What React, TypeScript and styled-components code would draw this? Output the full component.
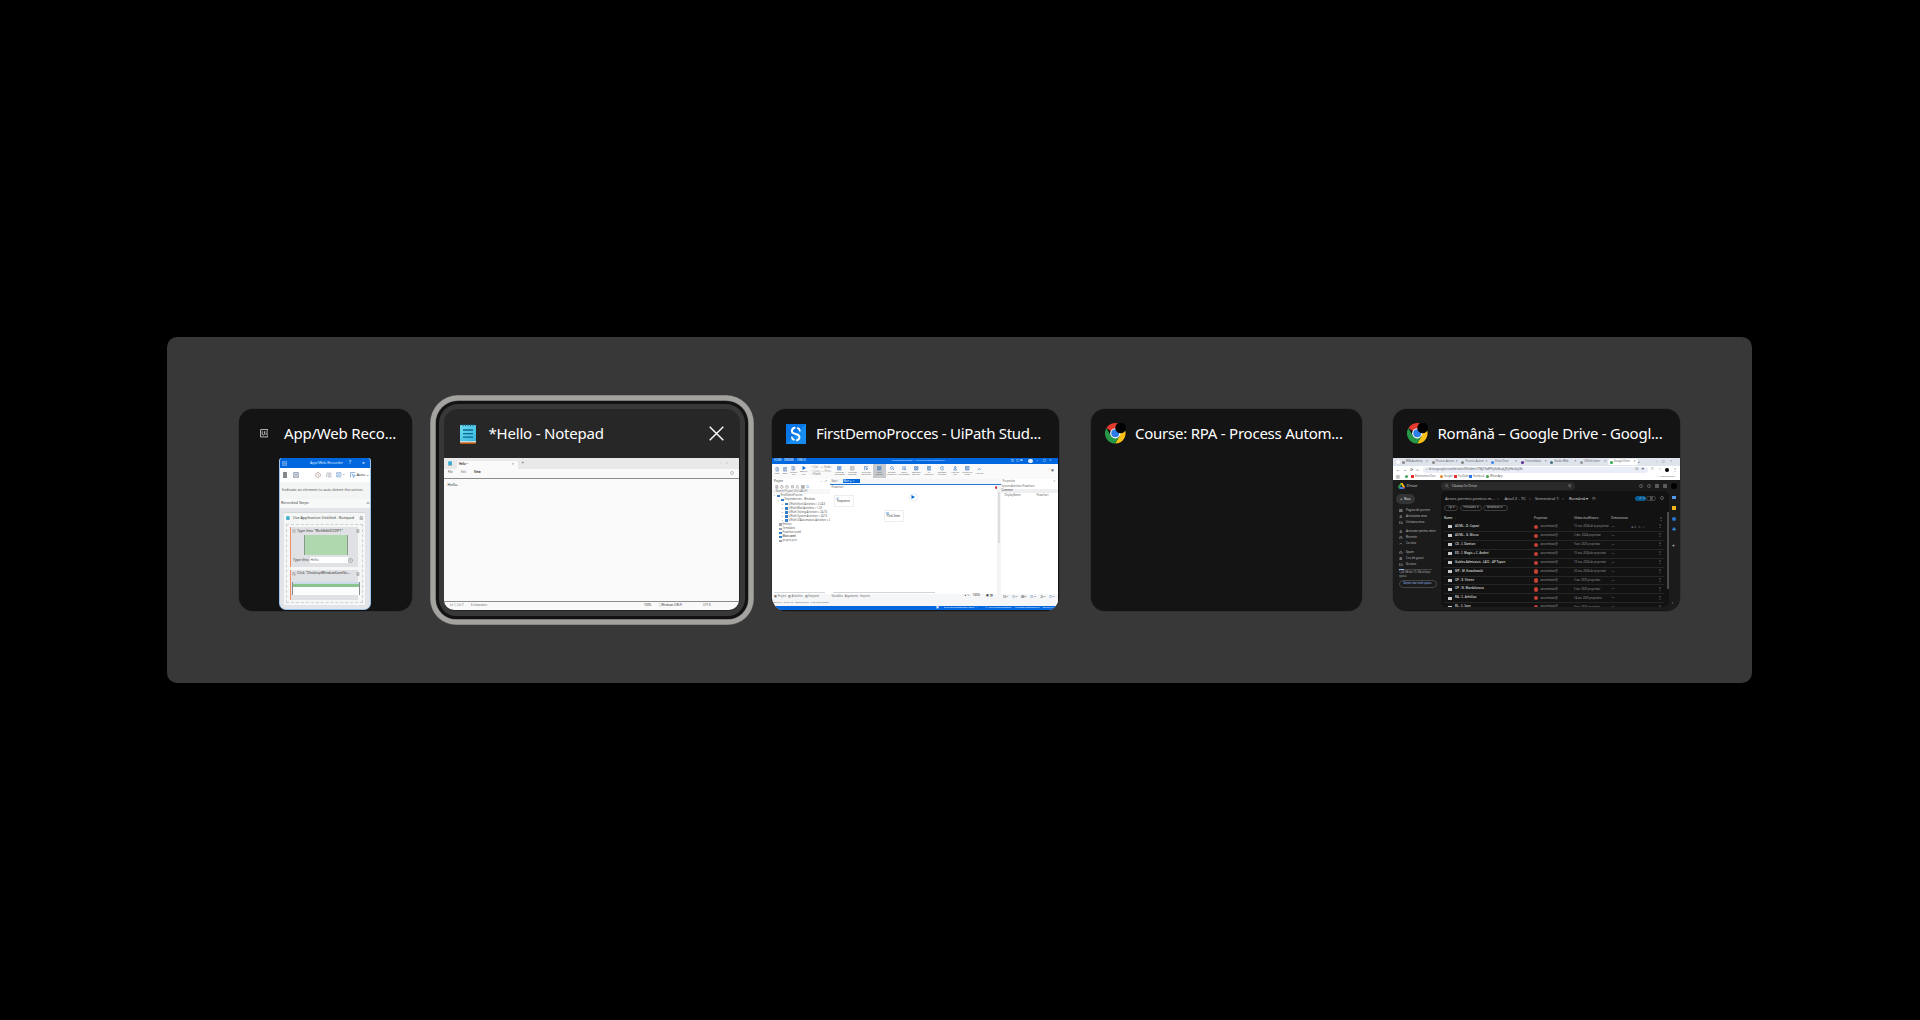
import React from "react";
import styled, { createGlobalStyle } from "styled-components";

const GlobalStyle = createGlobalStyle`
  * { box-sizing: border-box; }
  html, body { margin: 0; background: #000; overflow: hidden; }
  body { font-family: "Noto Sans", "Open Sans", sans-serif; }
  svg { display: block; flex: none; }
`;

/* ---------- Switcher shell ---------- */

const Screen = styled.main`
  width: 1920px;
  height: 1020px;
  padding: 337px 0 0 167px;
  background: #000;
`;

const Panel = styled.section`
  display: flex;
  align-items: flex-start;
  width: 1585px;
  height: 346px;
  padding: 72px 72px 0;
  border-radius: 10px;
  background: #383838;
`;

const Card = styled.article<{ $w: number; $gap: number; $active?: boolean }>`
  flex: none;
  display: flex;
  flex-direction: column;
  width: ${(p) => p.$w}px;
  height: 201.5px;
  margin-left: ${(p) => p.$gap}px;
  border-radius: ${(p) => (p.$active ? "14px 14px 12px 12px" : "14px")};
  background: ${(p) => (p.$active ? "#272727" : "#141414")};
  box-shadow: ${(p) =>
    p.$active
      ? "0 0 0 5px #383838, 0 0 0 8px #121212, 0 0 0 8.5px #555, 0 0 0 13.5px #a5a39f, 0 0 0 14px #6c6b69"
      : "0 0 0 0.5px #2b2b2b"};
  overflow: ${(p) => (p.$active ? "visible" : "hidden")};
`;

const Header = styled.header<{ $pad: number }>`
  flex: none;
  display: flex;
  align-items: center;
  height: 49px;
  padding: 0 14px 0 ${(p) => p.$pad}px;
`;

const IconBox = styled.div<{ $w: number }>`
  flex: none;
  width: ${(p) => p.$w}px;
`;

const Title = styled.h2<{ $spacing: number }>`
  flex: 1;
  margin: 0;
  padding-bottom: 2px;
  color: #fff;
  font-size: 15px;
  font-weight: 400;
  line-height: 22px;
  letter-spacing: ${(p) => p.$spacing}px;
  white-space: nowrap;
`;

/* ---------- Shared preview pieces ---------- */

const Preview = styled.div<{ $w: number; $bg: string; $r?: string }>`
  display: flex;
  flex-direction: column;
  align-self: ${(p) => (p.$w < 100 ? "center" : "flex-start")};
  width: ${(p) => p.$w}px;
  height: 152px;
  border-radius: ${(p) => p.$r ?? "0"};
  background: ${(p) => p.$bg};
  overflow: hidden;
`;

const Row = styled.div<{ $h: number; $bg?: string; $px?: number }>`
  flex: none;
  display: flex;
  align-items: center;
  height: ${(p) => p.$h}px;
  padding-left: ${(p) => p.$px ?? 0}px;
  background: ${(p) => p.$bg ?? "transparent"};
`;

const Col = styled.div<{ $w?: number; $bg?: string }>`
  display: flex;
  flex-direction: column;
  flex: ${(p) => (p.$w ? `0 0 ${p.$w}px` : "1")};
  min-width: 0;
  background: ${(p) => p.$bg ?? "transparent"};
`;

const Cell = styled.span<{ $w?: number; $c?: string; $s?: number; $b?: boolean }>`
  flex: none;
  width: ${(p) => (p.$w ? `${p.$w}px` : "auto")};
  color: ${(p) => p.$c ?? "#666"};
  font-size: ${(p) => p.$s ?? 3}px;
  font-weight: ${(p) => (p.$b ? 600 : 400)};
  line-height: 1.3;
  white-space: nowrap;
`;

const Dot = styled.i<{ $c: string; $w?: number; $h?: number; $m?: number; $r?: number }>`
  flex: none;
  width: ${(p) => p.$w ?? 3}px;
  height: ${(p) => p.$h ?? 3}px;
  margin-right: ${(p) => p.$m ?? 0}px;
  border-radius: ${(p) => p.$r ?? 0}px;
  background: ${(p) => p.$c};
`;

/* ---------- Icons ---------- */

const NotepadIcon = ({ size = 20 }: { size?: number }) => (
  <svg width={(size * 16) / 20} height={size} viewBox="0 0 16 20">
    <defs>
      <linearGradient id="pad" x1="0" y1="0" x2="1" y2="1">
        <stop offset="0" stopColor="#6fdcf0" />
        <stop offset="1" stopColor="#35b4dc" />
      </linearGradient>
    </defs>
    <rect x="0" y="15" width="16" height="5" rx="1" fill="#b8560f" />
    <rect x="0" y="15" width="16" height="3.4" fill="#e9e4df" />
    <rect x="0" y="1" width="16" height="16.2" rx="0.8" fill="url(#pad)" />
    <path d="M3 0v2.2M5.5 0v2.2M8 0v2.2M10.5 0v2.2M13 0v2.2" stroke="#125f7d" strokeWidth="1" />
    <path d="M3 6h10M3 9.7h10M3 13.2h10" stroke="#096a94" strokeWidth="1.3" />
  </svg>
);

const ChromeIcon = () => (
  <svg width="20.5" height="20.5" viewBox="0 0 48 48">
    <path d="M24 24 3.2 12A24 24 0 0 1 44.8 12Z" fill="#e33b2e" />
    <path d="M24 12h20.8A24 24 0 0 1 24 48l10.4-18Z" fill="#fbc116" />
    <path d="M3.2 12A24 24 0 0 0 24 48l10.4-18L13.6 30Z" fill="#279847" />
    <circle cx="24" cy="24" r="12" fill="#fff" />
    <circle cx="24" cy="24" r="9.3" fill="#2f7de9" />
    <circle cx="36.5" cy="11.5" r="12.5" fill="#000" />
  </svg>
);

const StudioIcon = () => (
  <svg width="20" height="20" viewBox="0 0 20 20">
    <rect width="20" height="20" fill="#0877e5" />
    <path d="M0 20 20 0v20Z" fill="#168bf0" />
    <path d="M8.6 3.8C5.4 4.6 5 8.4 7.9 9.4l3.3 1.1c3 1.2 2.9 4.9-.2 5.7" fill="none" stroke="#fff" strokeWidth="2" strokeLinecap="round" />
    <path d="M5.9 13.3c.2 1.2.8 2 1.9 2.5M11.8 4.1c1.2.5 1.9 1.4 2 2.6" fill="none" stroke="#fff" strokeWidth="1.8" strokeLinecap="round" />
  </svg>
);

const UiIcon = ({ size = 8.5 }: { size?: number }) => (
  <svg width={size} height={size} viewBox="0 0 9 9" fill="none" stroke="#eee" strokeWidth="0.8">
    <path d="M.6.6h7.8v7.8H.6Z" />
    <path d="M2.4 2.4v2.6c0 1.8 2.4 1.8 2.4 0V2.4M6.5 3.7v2.7M6.5 2v.8" />
  </svg>
);

const CloseIcon = () => (
  <svg width="15" height="15" viewBox="0 0 15 15" stroke="#fff" strokeWidth="1.4">
    <path d="m.7.7 13.6 13.6M14.3.7.7 14.3" />
  </svg>
);

const DriveIcon = () => (
  <svg width="7" height="6" viewBox="0 0 14 12">
    <path d="M5 0h4L4.5 8 2.3 12 0 8Z" fill="#2ba24c" />
    <path d="M5 0h4l5 8H9.5Z" fill="#fbbf12" />
    <path d="M4.5 8H14l-2.3 4H2.3Z" fill="#3c7ee8" />
    <path d="M9.5 8H14l-2.3 4Z" fill="#e5483a" />
  </svg>
);

type GlyphKind = "doc" | "trash" | "circle" | "grid" | "list" | "cursor" | "search" | "up" | "save" | "people" | "folder";
const shapes: Record<GlyphKind, string> = {
  doc: "M2 1h4l2 2v6H2ZM6 1v2h2M3.5 5h3M3.5 7h3",
  trash: "M1.5 2.5h7M3.5 2V1h3v1M2.5 3v6h5V3M4.2 4.5v3M5.8 4.5v3",
  circle: "M5 1a4 4 0 1 0 .01 0M5 3v2l1.5 1",
  grid: "M1 1h3.3v3.3H1ZM5.7 1H9v3.3H5.7ZM1 5.7h3.3V9H1ZM5.7 5.7H9V9H5.7Z",
  list: "M1 2h8M3 5h6M3 8h6M1 4v4",
  cursor: "M1 9V1h8M4 4l5 2-2 .8L6 9Z",
  search: "M4 1a3 3 0 1 0 .01 0M6.3 6.3 9 9",
  up: "M1.5 7 5 3l3.5 4",
  save: "M1 1h8v8H1ZM3 1v3h4V1M3 9V6h4v3",
  people: "M5 1.2a1.8 1.8 0 1 0 .01 0M1.5 9c0-4.5 7-4.5 7 0Z",
  folder: "M.8 2h3l1 1h4.4v5H.8Z",
};
const Glyph = ({ k, s = 4, c = "#777", w = 1 }: { k: GlyphKind; s?: number; c?: string; w?: number }) => (
  <svg width={s} height={s} viewBox="0 0 10 10" fill="none" stroke={c} strokeWidth={w}>
    <path d={shapes[k]} />
  </svg>
);

const PlayIcon = () => (
  <svg width="4" height="4" viewBox="0 0 8 8" fill="#006ad8">
    <path d="M1 0 8 4 1 8Z" />
  </svg>
);

const Spaced = styled.div<{ $w: number }>`
  flex: none;
  display: flex;
  align-items: center;
  width: ${(p) => p.$w}px;
`;

/* ---------- Recorder preview ---------- */

const RecorderFrame = styled(Preview)`
  margin-right: 1px;
  border: 0.6px solid #9bc4ef;
  border-top: 0;
  border-radius: 3px 3px 7px 7px;
`;

const StepsArea = styled.div`
  flex: 1;
  padding: 4px 5px 5px 4px;
  background: #e2e4e7;
`;

const AppBox = styled.div`
  display: flex;
  flex-direction: column;
  height: 93px;
  padding: 0 2px;
  border-top: 1px solid #d3d5d8;
  background: #f5f6f6;
`;

const StepsBox = styled.div`
  display: flex;
  flex-direction: column;
  gap: 3px;
  height: 79px;
  padding: 2.5px 4px 0 2.5px;
  border: 0.8px dashed #cfd1d3;
`;

const Step = styled.div<{ $h: number }>`
  display: flex;
  flex-direction: column;
  height: ${(p) => p.$h}px;
  padding-left: 1.5px;
  border-left: 1.4px solid #f58a68;
  background: #e0e1e4;
`;

const Shot = styled.div`
  flex: none;
  width: 44px;
  height: 20px;
  margin-left: 12px;
  border: solid #8a9a8b;
  border-width: 0 0.8px;
  background: #afd8af;
`;

const ClickShot = styled.div`
  width: 68px;
  height: 13px;
  margin-top: 4px;
  border: solid #8b8e90;
  border-width: 0 0.8px;
  background: linear-gradient(#c9dbe9 0 1.5px, #89c38e 1.5px 4.5px, #fbfcfb 4.5px);
`;

const Field = styled.div`
  width: 38px;
  height: 6px;
  padding-left: 1px;
  background: #fff;
  display: flex;
  align-items: center;
`;

const RecorderPreview = () => (
  <RecorderFrame $w={92} $bg="#f3f5f5">
    <Row $h={10} $bg="#0067df" $px={2}>
      <Spaced $w={28}><UiIcon size={5} /></Spaced>
      <Cell $w={39} $c="#dceaff" $s={3.75}>App/Web Recorder</Cell>
      <Cell $w={13} $c="#fff" $s={4.5}>?</Cell>
      <Cell $c="#fff" $s={5}>×</Cell>
    </Row>
    <Row $h={13.5} $bg="#fff" $px={3}>
      <Spaced $w={10}><Dot $c="#85888b" $w={4} $h={6} /></Spaced>
      <Spaced $w={21.5}><Glyph k="save" s={6} c="#65798f" /></Spaced>
      <Spaced $w={11}><Glyph k="circle" s={6} c="#a07e72" /></Spaced>
      <Spaced $w={10.5}><Glyph k="list" s={6} c="#77818c" /></Spaced>
      <Spaced $w={14}><Glyph k="save" s={5.5} c="#709ed2" /><Cell $s={3.5}>⌄</Cell></Spaced>
      <Spaced $w={6.5}><Glyph k="cursor" s={6} c="#3a83cc" /></Spaced>
      <Cell $s={4} $c="#333">Auto ⌄</Cell>
    </Row>
    <Row $h={17.5} $px={2}><Cell $s={3.8} $c="#555">Indicate an element to auto detect the action.</Cell></Row>
    <Row $h={8.5} $px={1} $bg="#f7f8f8">
      <Cell $w={84.5} $s={3.8} $c="#444">Recorded Steps</Cell>
      <Glyph k="up" s={4} c="#333" w={1.4} />
    </Row>
    <StepsArea>
      <AppBox>
        <Row $h={11}>
          <Spaced $w={7}><NotepadIcon size={4.5} /></Spaced>
          <Cell $w={65.5} $s={3.7} $c="#333">Use Application: Untitled - Notepad</Cell>
          <Glyph k="trash" s={4.5} />
        </Row>
        <StepsBox>
          <Step $h={39.5}>
            <Row $h={8}><Spaced $w={5}><Glyph k="list" s={4} /></Spaced><Cell $w={59} $s={3.7} $c="#333">Type Into "RichEditD2DPT"</Cell><Glyph k="trash" s={4} /></Row>
            <Shot />
            <Row $h={10} $px={1}><Cell $w={16.5} $s={3.6} $c="#333">Type this:</Cell><Field><Cell $s={3.4}>Hello</Cell></Field><Spaced $w={6}><Glyph k="circle" s={5} /></Spaced></Row>
          </Step>
          <Step $h={30}>
            <Row $h={8}><Spaced $w={5}><Glyph k="cursor" s={4} /></Spaced><Cell $w={59} $s={3.6} $c="#333">Click "DesktopWindowXamlSo...</Cell><Glyph k="trash" s={4} /></Row>
            <ClickShot />
          </Step>
        </StepsBox>
      </AppBox>
    </StepsArea>
  </RecorderFrame>
);

/* ---------- Notepad preview ---------- */

const NoteTab = styled.div`
  display: flex;
  align-items: center;
  align-self: flex-end;
  width: 61px;
  height: 8px;
  padding-left: 2px;
  border-radius: 2px 2px 0 0;
  background: #fafafa;
`;

const Writing = styled.div`
  flex: 1;
  padding: 4px 3.5px;
  border: solid #8c8c8c;
  border-width: 0.8px 0;
`;

const NotepadPreview = () => (
  <Preview $w={295} $bg="#f9f9f9" $r="1px 1px 10px 10px">
    <Row $h={11} $bg="#e9e9e9" $px={4}>
      <Spaced $w={9}><NotepadIcon size={5} /></Spaced>
      <NoteTab><Cell $w={53} $s={2.7} $c="#111" $b>Hello •</Cell><Cell $s={3} $c="#333">×</Cell></NoteTab>
      <Cell $w={202} $s={4.5}> &nbsp; &nbsp;+</Cell>
      <Cell $s={3} $c="#888">▫ &nbsp; &nbsp; &nbsp;×</Cell>
    </Row>
    <Row $h={8.5} $px={4}>
      <Cell $w={13} $s={2.8} $c="#333">File</Cell>
      <Cell $w={13} $s={2.8} $c="#777">Edit</Cell>
      <Cell $w={256} $s={2.8} $c="#111" $b>View</Cell>
      <Glyph k="circle" s={4} />
    </Row>
    <Writing><Row $h={4}><Cell $s={4} $c="#333">Hello.</Cell></Row></Writing>
    <Row $h={8.5} $px={6}>
      <Cell $w={21} $s={2.8}>Ln 1, Col 7</Cell>
      <Cell $w={173} $s={2.8}>6 characters</Cell>
      <Cell $w={15} $s={2.8} $c="#333">100%</Cell>
      <Cell $w={44} $s={2.8} $c="#333">| Windows (CRLF)</Cell>
      <Cell $s={2.8}>UTF-8</Cell>
    </Row>
  </Preview>
);

/* ---------- Studio preview ---------- */

const Tool = styled.div<{ $w: number; $on?: boolean }>`
  flex: none;
  display: flex;
  flex-direction: column;
  align-items: center;
  justify-content: center;
  gap: 1px;
  width: ${(p) => p.$w}px;
  height: 14px;
  background: ${(p) => (p.$on ? "#c6c9cd" : "transparent")};
`;

const ToolLabel = styled.span`
  color: #666;
  font-size: 2.3px;
  line-height: 2.6px;
  text-align: center;
`;

const Body = styled.div`
  flex: 1;
  display: flex;
  min-height: 0;
`;

const StudioTab = styled.div`
  display: flex;
  align-items: center;
  width: 17px;
  height: 4px;
  margin-left: 5px;
  background: #0067df;
`;

const Canvas = styled.div`
  position: relative;
  flex: 1;
  background-color: #fff;
  background-image: radial-gradient(#eef0f2 0.5px, transparent 0.6px);
  background-size: 4px 4px;
`;

const FlowNode = styled.div<{ $x: number; $y: number }>`
  position: absolute;
  left: ${(p) => p.$x}px;
  top: ${(p) => p.$y}px;
  display: flex;
  flex-direction: column;
  width: 20px;
  height: 12.5px;
  border: 0.7px solid #eceef0;
  background: #fff;
  text-align: center;
`;

const StartNode = styled.div`
  position: absolute;
  left: 79px;
  top: 3px;
  display: grid;
  place-items: center;
  width: 9px;
  height: 9px;
  border: 0.6px solid #e9ecef;
  border-radius: 50%;
  background: #fff;
`;

const VScroll = styled.div`
  flex: 0 0 3.5px;
  padding: 7px 1px 0;
  background: #f3f4f5;
  &::before {
    content: "";
    display: block;
    height: 51px;
    background: #dcdddf;
  }
`;

const tools: [string, string, number, GlyphKind][] = [
  ["New", "", 8, "doc"], ["Save", "", 8, "save"], ["Export", "File", 9, "doc"], ["Debug", "File", 11, "cursor"],
];
const moreTools: [string, string, number, GlyphKind][] = [
  ["Manage", "Packages", 13, "grid"], ["Manage", "Entities", 13, "save"], ["App/Web", "Recorder", 14, "cursor"],
  ["User", "Events", 0, "grid"], ["Screen", "Scraping", 12.5, "search"], ["Table", "Extraction", 12, "list"],
  ["Selector", "Builder", 12.5, "grid"], ["UI", "Explorer", 13, "save"], ["Remove", "Unused", 13, "circle"],
  ["Analyze", "File", 13, "people"], ["Export to", "Excel", 12, "save"], ["Publish", "", 12, "up"],
];
const tree = [
  [4, "FirstDemoProcces"], [8, "Dependencies - Windows"], [12, "UiPath.Excel.Activities = 2.24.3"],
  [12, "UiPath.Mail.Activities = 1.23"], [12, "UiPath.Testing.Activities = 24.10"], [12, "UiPath.System.Activities = 24.10"],
  [12, "UiPath.UIAutomation.Activities = 24.10"], [9, "Entities"], [9, "Templates"], [9, "Flowchart.xaml"],
  [9, "Main.xaml"], [9, "project.json"],
] as const;

const StudioPreview = () => (
  <Preview $w={286} $bg="#f5f6f7">
    <Row $h={5.8} $bg="#0067df" $px={2}>
      <Cell $w={10} $s={2.6} $c="#dbe9ff">HOME</Cell>
      <Cell $w={13} $s={2.6} $c="#fff">DESIGN</Cell>
      <Cell $w={95} $s={2.6} $c="#dbe9ff">DEBUG</Cell>
      <Cell $w={119} $s={2.4} $c="#dbe9ff">FirstDemoProcces — UiPath Studio Community</Cell>
      <Cell $w={17} $s={3} $c="#fff">◫ &nbsp;▢ &nbsp;⊞</Cell>
      <Dot $c="#e8edf4" $w={4.5} $h={4.5} $r={3} $m={4} />
      <Cell $s={3} $c="#fff">– &nbsp; &nbsp; &nbsp;▢ &nbsp; &nbsp; ×</Cell>
    </Row>
    <Row $h={15.2} $bg="#fafafa" $px={1}>
      {tools.map(([a, b, w, k], i) => (
        <Tool key={a} $w={w}>
          {i === 3 ? <PlayIcon /> : <Glyph k={k} s={4.5} c="#5b87b8" w={1.3} />}
          <ToolLabel>{a}<br />{b}</ToolLabel>
        </Tool>
      ))}
      <Col $w={24}>
        <Cell $s={2.8} $c="#777">&nbsp; &nbsp;□ Cut &nbsp; — Undo</Cell>
        <Cell $s={2.8} $c="#aaa">&nbsp; &nbsp;□ Copy — Redo</Cell>
        <Cell $s={2.8} $c="#777">&nbsp; &nbsp;□ Paste</Cell>
      </Col>
      {moreTools.map(([a, b, w, k], i) => (
        <Tool key={i} $w={w || 12.5} $on={w === 0}><Glyph k={k} s={4.5} c={i === 1 ? "#aaa" : "#3f7cc0"} w={1.4} /><ToolLabel>{a}<br />{b}</ToolLabel></Tool>
      ))}
      <Cell $w={62} /><Cell $s={3}>⌃ ▣</Cell>
    </Row>
    <Body>
      <Col $w={57.5} $bg="#fff">
        <Row $h={5.5} $px={2}><Cell $w={46} $s={2.8} $c="#333">Project</Cell><Cell $s={3}>⌄ ▫ ×</Cell></Row>
        <Row $h={5} $px={3}>
          {(["doc", "circle", "circle", "cursor", "folder", "grid", "search"] as GlyphKind[]).map((k, i) => (
            <Spaced $w={5.2} key={i}><Glyph k={k} s={3.7} c={i === 6 ? "#2c7ad1" : "#555"} /></Spaced>
          ))}
        </Row>
        <Row $h={4.5} $px={2} $bg="#f7f7f7"><Cell $s={2.6}>⌕ Search Project (Ctrl+Alt+F)</Cell></Row>
        {tree.map(([x, label], i) => (
          <Row $h={4.1} $px={x - 2} key={label}>
            {i < 7 && <Cell $w={3} $s={2.4}>▸</Cell>}
            <Dot $c={i > 6 && i !== 9 && i !== 10 ? "#9ba5b0" : "#347fcd"} $w={2.8} $h={2.4} $m={0.7} />
            <Cell $s={2.6} $c="#555" $b={i === 10}>{label}</Cell>
          </Row>
        ))}
        <Col />
        <Row $h={3} $px={2}><Dot $c="#d5d7d9" $w={51} $h={1.5} /></Row>
        <Row $h={5} $px={2} $bg="#f5f6f7"><Cell $s={2.6}>▣ Project &nbsp; ▧ Activities &nbsp; ▤ Snippets</Cell></Row>
      </Col>
      <Col>
        <Row $h={5} $px={2}><Cell $w={6} $s={2.6}>Start</Cell><StudioTab><Cell $s={2.6} $c="#fff">&nbsp;Main ● &nbsp;×</Cell></StudioTab></Row>
        <Row $h={0.8} $bg="#2478d8" />
        <Body>
          <Col $bg="#fff">
            <Row $h={5} $px={2}><Cell $w={163} $s={2.6}>Flowchart</Cell><Dot $c="#d53441" $r={2} /></Row>
            <Canvas>
              <FlowNode $x={4} $y={5}><Row $h={4.5} $px={1}><Glyph k="list" s={3} c="#3180ca" /></Row><Cell $s={2.8} $c="#333">Sequence</Cell></FlowNode>
              <StartNode><PlayIcon /></StartNode>
              <FlowNode $x={54} $y={20}><Row $h={4.5} $px={1}><Glyph k="save" s={3} c="#3180ca" /></Row><Cell $s={2.8} $c="#333">Click Item</Cell></FlowNode>
            </Canvas>
            <Row $h={3} $px={3}><Dot $c="#d2d4d6" $w={102} $h={1.6} /></Row>
          </Col>
          <VScroll />
        </Body>
        <Row $h={5} $px={2} $bg="#f5f6f7"><Cell $w={133} $s={2.6}>Variables &nbsp; Arguments &nbsp; Imports</Cell><Cell $s={3} $c="#333">● ✎ &nbsp; 100% &nbsp; &nbsp; &nbsp; &nbsp;▣ ▧</Cell></Row>
      </Col>
      <Col $w={57.5} $bg="#fff">
        <Row $h={5.5} $px={2}><Cell $w={51} $s={2.6}>Properties</Cell><Cell $s={3}>×</Cell></Row>
        <Row $h={4.5} $px={1}><Cell $s={2.6}>System.Activities.Flowchart</Cell></Row>
        <Row $h={4} $px={1} $bg="#eeeff0"><Cell $s={2.6} $c="#333">Common</Cell></Row>
        <Row $h={4.5} $px={4}><Cell $w={32} $s={2.6}>DisplayName</Cell><Cell $s={2.6}>Flowchart</Cell></Row>
        <Col />
        <Row $h={5} $px={2} $bg="#f5f6f7">
          {(["cursor", "search", "grid", "list", "people", "circle"] as GlyphKind[]).map((k, i) => (
            <Spaced $w={9.3} key={k}><Glyph k={k} s={3.5} c={i % 2 ? "#3a78bb" : "#555"} /><Cell $s={2.5}>O.</Cell></Spaced>
          ))}
        </Row>
      </Col>
    </Body>
    <Row $h={7} $px={1.5}><Cell $s={2.4}>Output &nbsp; Error List &nbsp; Breakpoints &nbsp; Find References</Cell></Row>
    <Row $h={4.2} $bg="#0067df" $px={164}>
      <Cell $w={8} $s={2.6} $c="#fff">▣</Cell>
      <Cell $w={41} $s={2.3} $c="#fff">● UiPath Orchestrator Cloud &nbsp;⌄</Cell>
      <Cell $w={30} $s={2.3} $c="#fff">✦ Add to Source Control</Cell>
      <Cell $w={27} $s={2.3} $c="#fff">Windows Compatibility</Cell>
      <Cell $s={2.3} $c="#fff">VB.Net 24.10</Cell>
    </Row>
  </Preview>
);

/* ---------- Drive preview ---------- */

const BrowserTab = styled.div<{ $on?: boolean }>`
  flex: none;
  display: flex;
  align-items: center;
  gap: 1px;
  width: 29.7px;
  height: 6.5px;
  padding: 0 2px;
  border-radius: 2px;
  background: ${(p) => (p.$on ? "#fff" : "transparent")};
`;

const Address = styled.div`
  display: flex;
  align-items: center;
  width: 225px;
  height: 6px;
  padding-left: 3px;
  border-radius: 3px;
  background: #e9eef8;
`;

const Pill = styled.div<{ $w: number; $h: number; $bg?: string; $line?: string; $m?: number }>`
  flex: none;
  display: flex;
  align-items: center;
  width: ${(p) => p.$w}px;
  height: ${(p) => p.$h}px;
  padding: 0 3px;
  margin-right: ${(p) => p.$m ?? 0}px;
  border: 0.7px solid ${(p) => p.$line ?? "transparent"};
  border-radius: 5px;
  background: ${(p) => p.$bg ?? "transparent"};
  overflow: hidden;
`;

const Files = styled.div`
  flex: none;
  display: flex;
  width: 228px;
  height: 116px;
  padding-left: 3px;
  border-radius: 5px;
  background: #121212;
  overflow: hidden;
`;

const FilesScroll = styled.div`
  flex: none;
  width: 2px;
  height: 77px;
  margin-top: 21px;
  background: #4a4b4d;
`;

const FileRow = styled.div`
  flex: none;
  display: flex;
  align-items: center;
  width: 220px;
  height: 8.95px;
  padding-left: 4px;
  border-bottom: 0.8px solid #262626;
`;

const SideGap = styled.div<{ $h: number }>`
  flex: none;
  height: ${(p) => p.$h}px;
`;

const Side = ({ k, label }: { k: GlyphKind; label: string }) => (
  <Row $h={6} $px={6}><Spaced $w={7}><Glyph k={k} s={3.5} c="#bbb" w={1.3} /></Spaced><Cell $s={2.9} $c="#bbb">{label}</Cell></Row>
);

const tabs: [string, string][] = [
  ["#888", "RPA Academy"], ["#888", "Process Autom"], ["#888", "Process Autom"], ["#4285f4", "Drive Drive"],
  ["#5c2d91", "Universitatea"], ["#4a7180", "Studio Web"], ["#999", "UiPath Learn"], ["#34a853", "Google Drive"],
];
const files = [
  ["AI/ML - D. Copaci", "15 nov. 2024 de la proprietar"], ["AI/ML - G. Moroz", "2 dec. 2024 proprietar"], ["CD - I. Damian", "9 ian. 2025 proprietar"],
  ["ED - I. Magic + C. Andrei", "15 nov. 2024 de proprietar"], ["Guides.Admission - LAIC - AP Topan", "19 nov. 2024 de proprietar"],
  ["MP - M. Kowalewski", "20 nov. 2024 de proprietar"], ["OP - E. Vinten", "2 ian. 2025 proprietar"], ["OP - N. Mardaloescu", "5 ian. 2025 proprietar"],
  ["RA - C. Arhiiliuc", "14 ian. 2025 proprietar"], ["RL - C. Ivan", "3 ian. 2025 proprietar"],
];

const DrivePreview = () => (
  <Preview $w={286.5} $bg="#1b1b1c">
    <Row $h={8} $bg="#dee3ec" $px={3}>
      <Spaced $w={4}><Dot $c="#fff" $r={2} $w={4} $h={4} /></Spaced>
      {tabs.map(([c, t], i) => (
        <BrowserTab key={i} $on={i === 7}><Dot $c={c} $r={1.5} /><Cell $w={19} $s={2.6}>{t}</Cell><Cell $s={3} $c="#333">×</Cell></BrowserTab>
      ))}
      <Cell $w={18} $s={4} $c="#333">+</Cell><Cell $s={3}>– &nbsp; &nbsp; &nbsp; ▢ &nbsp; &nbsp; &nbsp;×</Cell>
    </Row>
    <Row $h={7.3} $bg="#fff" $px={3}>
      <Cell $w={27} $s={4} $c="#333">← &nbsp; → &nbsp; ⟳ &nbsp; ⌂</Cell>
      <Address><Cell $w={209} $s={2.9} $c="#555">⌕ drive.google.com/drive/u/0/folders/1Mj2TwEPVyKxBoqLJJ5yHkcQuJ9x</Cell><Cell $s={3.5}>⊡ &nbsp; ★</Cell></Address>
      <Cell $w={17} $s={3.5}>&nbsp; &nbsp;⎘ &nbsp; &nbsp; &nbsp;⌕</Cell><Dot $c="#000" $w={4} $h={4} $r={2} $m={4} /><Cell $s={4}>⋮</Cell>
    </Row>
    <Row $h={7} $bg="#fff" $px={3}>
      <Spaced $w={9}><Glyph k="grid" s={3.7} /></Spaced>
      <Dot $c="#4aa15c" $m={3} $r={2} />
      <Dot $c="#e52e2e" $m={1} /><Cell $w={25} $s={2.8}>Electronics Disc.</Cell>
      <Dot $c="#e78b2d" $m={1} $r={2} /><Cell $w={10} $s={2.6}>Google</Cell>
      <Dot $c="#e52e2e" $m={1} /><Cell $w={11} $s={2.6}>YouTube</Cell>
      <Dot $c="#2c77e5" $m={1} /><Cell $w={13} $s={2.6}>Facebook</Cell>
      <Dot $c="#43a047" $m={1} $r={2} /><Cell $w={166} $s={2.6}>WhatsApp</Cell>
      <Cell $s={2.4}>▢ All Bookmarks</Cell>
    </Row>
    <Row $h={11.2} $px={5}>
      <Spaced $w={8.5}><DriveIcon /></Spaced><Cell $w={34.5} $s={4.3} $c="#ccc">Drive</Cell>
      <Pill $w={134} $h={8} $bg="#2a2a2b" $m={64}><Glyph k="search" s={4} c="#bbb" /><Cell $w={119} $s={3.5} $c="#ccc">&nbsp; &nbsp;Căutați în Drive</Cell><Glyph k="list" s={3.5} c="#bbb" /></Pill>
      {(["circle", "circle", "grid", "grid"] as GlyphKind[]).map((k, i) => <Spaced $w={8.1} key={i}><Glyph k={k} s={4.2} c="#aaa" /></Spaced>)}
      <Dot $c="#000" $w={6} $h={6} $r={3} />
    </Row>
    <Body>
      <Col $w={48}>
        <SideGap $h={2} />
        <Row $h={11} $px={3}><Pill $w={19} $h={10} $bg="#333436"><Cell $s={4} $c="#fff">+</Cell><Cell $s={3.3} $c="#eee">&nbsp; Nou</Cell></Pill></Row>
        <SideGap $h={3} />
        <Side k="save" label="Pagina de pornire" /><Side k="people" label="Activitatea mea" /><Side k="folder" label="Unitatea mea" />
        <SideGap $h={3} />
        <Side k="people" label="Accesate pentru mine" /><Side k="circle" label="Recente" /><Side k="up" label="Cu stea" />
        <SideGap $h={3} />
        <Side k="circle" label="Spam" /><Side k="trash" label="Coș de gunoi" /><Side k="folder" label="Stocare" />
        <SideGap $h={1.5} />
        <Row $h={1} $px={6}><Dot $c="#8bb3ed" $w={5} $h={0.9} /><Dot $c="#444" $w={28} $h={0.9} /></Row>
        <SideGap $h={1} />
        <Row $h={4} $px={6}><Cell $s={2.6} $c="#aaa">1,45 GB din 15 GB utilizați</Cell></Row>
        <Row $h={3.5} $px={6}><Cell $s={2.6} $c="#aaa">spațiu</Cell></Row>
        <SideGap $h={1.5} />
        <Row $h={8} $px={6}><Pill $w={38} $h={8} $line="#444"><Cell $s={2.65} $c="#93baf0">Obține mai mult spațiu</Cell></Pill></Row>
      </Col>
      <Files>
        <Col $w={223}>
          <SideGap $h={2} />
          <Row $h={10} $px={1}>
            <Cell $w={54} $s={4.3} $c="#bbb">Acces permis pentru m... &nbsp;›</Cell>
            <Cell $w={36} $s={4.3} $c="#bbb">&nbsp; &nbsp; &nbsp;Anul 2 - TC &nbsp; ›</Cell>
            <Cell $w={34} $s={4.3} $c="#bbb">Semestrul 1 &nbsp; ›</Cell>
            <Cell $w={66} $s={4.2} $c="#ddd">Română ▾ &nbsp; ⚇</Cell>
            <Pill $w={11} $h={5.5} $bg="#075d91"><Cell $s={3} $c="#fff">✓ ☰</Cell></Pill>
            <Pill $w={10} $h={5.5} $line="#444" $m={4}><Glyph k="grid" s={2.8} c="#bbb" /></Pill>
            <Glyph k="circle" s={4} c="#bbb" />
          </Row>
          <Row $h={9} $px={0}>
            <Pill $w={14} $h={5.5} $line="#3d3d3d" $m={1.5}><Cell $s={2.9} $c="#ccc">Tip ▾</Cell></Pill>
            <Pill $w={22} $h={5.5} $line="#3d3d3d" $m={1.5}><Cell $s={2.8} $c="#ccc">Persoane ▾</Cell></Pill>
            <Pill $w={25} $h={5.5} $line="#3d3d3d"><Cell $s={2.8} $c="#ccc">Modificări ▾</Cell></Pill>
          </Row>
          <SideGap $h={1.5} />
          <Row $h={8.9} $px={0}>
            <Cell $w={90} $s={2.8} $c="#ccc" $b>Nume &nbsp; ↑</Cell><Cell $w={40} $s={2.8} $c="#ccc">Proprietar</Cell>
            <Cell $w={37} $s={2.7} $c="#ccc">Ultima modificare ▾</Cell><Cell $w={47.5} $s={2.7} $c="#ccc">Dimensiunea</Cell><Cell $s={4} $c="#bbb">⋮</Cell>
          </Row>
          {files.map(([n, d], i) => (
            <FileRow key={n}>
              <Spaced $w={7}><Dot $c="#c9c9c9" $w={3.8} $h={3} /></Spaced><Cell $w={79} $s={2.95} $c="#ccc" $b>{n}</Cell>
              <Spaced $w={6.5}><Dot $c="#c54132" $w={4.2} $h={4.2} $r={2.1} /></Spaced><Cell $w={33.5} $s={2.8} $c="#999">anonimizat@</Cell>
              <Cell $w={37.5} $s={2.6} $c="#999">{d}</Cell><Cell $w={19} $s={3} $c="#999">—</Cell>
              <Cell $w={27.5} $s={3.3} $c="#bbb">{i === 0 ? "♙  ⇩  ✎  ☆" : ""}</Cell><Cell $s={3.7} $c="#aaa">⋮</Cell>
            </FileRow>
          ))}
        </Col>
        <FilesScroll />
      </Files>
      <Col>
        <SideGap $h={1} />
        <Row $h={10} $px={3}><Dot $c="#5299e9" $w={3.6} $h={3.6} /></Row>
        <Row $h={11} $px={3}><Dot $c="#f0b51d" $w={3.6} $h={3.6} /></Row>
        <Row $h={11.5} $px={3}><Dot $c="#2776d6" $w={3.6} $h={3.6} $r={2} /></Row>
        <Row $h={10.5} $px={3}><Cell $s={4.5} $c="#398cf0">✚</Cell></Row>
        <SideGap $h={6} />
        <Row $h={9} $px={3}><Cell $s={5} $c="#ccc">+</Cell></Row>
        <Col />
        <Row $h={14} $px={3}><Cell $s={4} $c="#ccc">›</Cell></Row>
      </Col>
    </Body>
  </Preview>
);

export default function App() {
  return (
    <Screen>
      <GlobalStyle />
      <Panel>
        <Card $w={173} $gap={0}>
          <Header $pad={20.5}><IconBox $w={24.5}><UiIcon /></IconBox><Title $spacing={-0.19}>App/Web Reco...</Title></Header>
          <RecorderPreview />
        </Card>
        <Card $w={296} $gap={32} $active>
          <Header $pad={16}><IconBox $w={28.5}><NotepadIcon /></IconBox><Title $spacing={-0.2}>*Hello - Notepad</Title><IconBox $w={17.5}><CloseIcon /></IconBox></Header>
          <NotepadPreview />
        </Card>
        <Card $w={287} $gap={32}>
          <Header $pad={14}><IconBox $w={30}><StudioIcon /></IconBox><Title $spacing={-0.3}>FirstDemoProcces - UiPath Stud...</Title></Header>
          <StudioPreview />
        </Card>
        <Card $w={271} $gap={32}>
          <Header $pad={14}><IconBox $w={30}><ChromeIcon /></IconBox><Title $spacing={-0.24}>Course: RPA - Process Autom...</Title></Header>
        </Card>
        <Card $w={287} $gap={31}>
          <Header $pad={14}><IconBox $w={30.5}><ChromeIcon /></IconBox><Title $spacing={-0.23}>Română – Google Drive - Googl...</Title></Header>
          <DrivePreview />
        </Card>
      </Panel>
    </Screen>
  );
}
